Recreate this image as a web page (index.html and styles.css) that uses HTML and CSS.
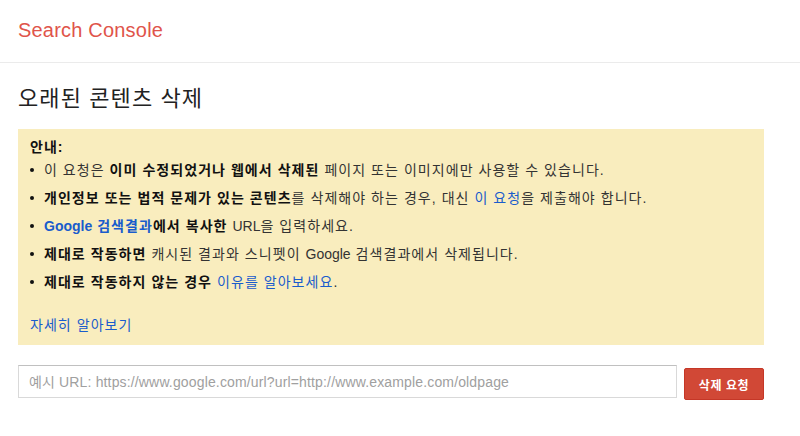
FILE: index.html
```html
<!DOCTYPE html>
<html lang="ko">
<head>
<meta charset="utf-8">
<title>Search Console - 오래된 콘텐츠 삭제</title>
<link rel="stylesheet" href="styles.css">
</head>
<body>
<header class="top-bar">
  <span class="brand">Search Console</span>
</header>
<main class="content">
  <h1 class="page-title">오래된 콘텐츠 삭제</h1>
  <section class="notice">
    <div class="notice-title">안내:</div>
    <ul class="notice-list">
      <li>이 요청은 <b>이미 수정되었거나 웹에서 삭제된</b> 페이지 또는 이미지에만 사용할 수 있습니다.</li>
      <li><b>개인정보 또는 법적 문제가 있는 콘텐츠</b>를 삭제해야 하는 경우, 대신 <a href="#" class="link">이 요청</a>을 제출해야 합니다.</li>
      <li><b><a href="#" class="link"><span class="latin">Google</span> 검색결과</a>에서 복사한</b> <span class="latin">URL</span>을 입력하세요.</li>
      <li><b>제대로 작동하면</b> 캐시된 결과와 스니펫이 <span class="latin">Google</span> 검색결과에서 삭제됩니다.</li>
      <li><b>제대로 작동하지 않는 경우</b> <a href="#" class="link">이유를 알아보세요</a>.</li>
    </ul>
    <a href="#" class="link more">자세히 알아보기</a>
  </section>
  <form class="request-form">
    <input class="url-input" type="text" placeholder="예시 URL: https://www.google.com/url?url=http://www.example.com/oldpage">
    <button class="submit-btn" type="button">삭제 요청</button>
  </form>
</main>
</body>
</html>
```

FILE: styles.css
```css
* { box-sizing: border-box; }

body {
  margin: 0;
  background: #fff;
  font-family: "Liberation Sans", Arial, "Noto Sans CJK KR", sans-serif;
  color: #222;
}

.top-bar {
  height: 63px;
  padding: 19px 18px 0;
  border-bottom: 1px solid #ebebeb;
}

.brand {
  font-size: 20px;
  line-height: 23px;
  letter-spacing: 0.2px;
  color: #e0544a;
}

.content {
  width: 746px;
  margin-left: 18px;
}

.page-title {
  margin: 22px 0 16px;
  font-size: 22px;
  line-height: 28px;
  font-weight: normal;
  letter-spacing: 1.1px;
  color: #222;
}

.notice {
  background: #f9edbe;
  padding: 10px 12px 10px;
  font-size: 14px;
  letter-spacing: 1.05px;
  color: #333;
}

.notice .latin { letter-spacing: 0; }

.notice b { color: #111; }

.notice-title {
  font-weight: bold;
  line-height: 17px;
  color: #111;
}

.notice-list {
  list-style: none;
  margin: 0;
  padding: 0;
}

.notice-list li {
  position: relative;
  padding-left: 14px;
  line-height: 28px;
}

.notice-list li::before {
  content: "";
  position: absolute;
  left: 0;
  top: 12px;
  width: 4px;
  height: 4px;
  border-radius: 50%;
  background: #111;
}

.link {
  color: #1a5ccc;
  text-decoration: none;
}

.more {
  display: block;
  margin-top: 19px;
  line-height: 20px;
}

.request-form {
  display: flex;
  align-items: flex-start;
  gap: 7px;
  margin-top: 20px;
}

.url-input {
  width: 659px;
  height: 33px;
  padding: 0 10px;
  border: 1px solid #d9d9d9;
  border-top-color: #c0c0c0;
  font-family: "Liberation Sans", Arial, "Noto Sans CJK KR", sans-serif;
  font-size: 14px;
  letter-spacing: 0.15px;
  color: #222;
  outline: none;
}

.url-input::placeholder { color: #a0a0a0; }

.submit-btn {
  width: 80px;
  height: 32px;
  margin-top: 3px;
  border: 1px solid #c53727;
  border-radius: 2px;
  background: #d14836;
  color: #fff;
  font-family: "Liberation Sans", Arial, "Noto Sans CJK KR", sans-serif;
  font-size: 12px;
  font-weight: bold;
  letter-spacing: 0.6px;
  cursor: pointer;
}
```
